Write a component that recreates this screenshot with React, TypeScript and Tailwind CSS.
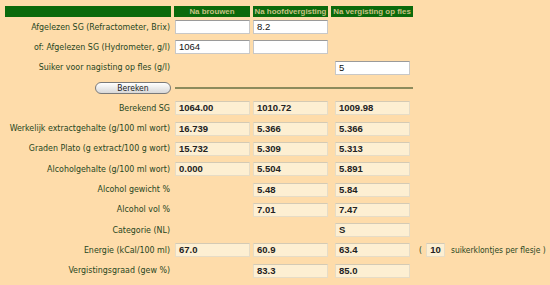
import React from "react";

type Row = {
  label: string;
  values: (string | null)[];
  extra?: boolean;
};

const results: Row[] = [
  { label: "Berekend SG", values: ["1064.00", "1010.72", "1009.98"] },
  { label: "Werkelijk extractgehalte (g/100 ml wort)", values: ["16.739", "5.366", "5.366"] },
  { label: "Graden Plato (g extract/100 g wort)", values: ["15.732", "5.309", "5.313"] },
  { label: "Alcoholgehalte (g/100 ml wort)", values: ["0.000", "5.504", "5.891"] },
  { label: "Alcohol gewicht %", values: [null, "5.48", "5.84"] },
  { label: "Alcohol vol %", values: [null, "7.01", "7.47"] },
  { label: "Categorie (NL)", values: [null, null, "S"] },
  { label: "Energie (kCal/100 ml)", values: ["67.0", "60.9", "63.4"], extra: true },
  { label: "Vergistingsgraad (gew %)", values: [null, "83.3", "85.0"] },
];

const labelFont = { fontFamily: '"DejaVu Sans Condensed", "DejaVu Sans", Verdana, sans-serif' };
const valueFont = { fontFamily: '"Liberation Sans", Arial, sans-serif' };

function Label({ children }: { children: React.ReactNode }) {
  return (
    <div className="flex items-center justify-end pr-[1px] text-[8.8px] text-[#27461d] whitespace-nowrap">
      {children}
    </div>
  );
}

function TextInput({ value, className = "" }: { value?: string; className?: string }) {
  return (
    <div className={`flex items-center ${className}`}>
      <div
        className="h-[14px] w-[75px] bg-white border border-[#c8c8c8] border-t-[#9a9a9a] pl-[3px] text-[9.5px] leading-[12px] text-[#111]"
        style={valueFont}
      >
        {value}
      </div>
    </div>
  );
}

function Field({ value, className = "" }: { value: string | null; className?: string }) {
  if (value === null) return <div />;
  return (
    <div className={`flex items-center ${className}`}>
      <div
        className="h-[14px] w-[75px] bg-[#fdefd2] border border-[#e6dcc6] border-t-[#d4cab4] pl-[3px] text-[9.5px] font-bold leading-[12px] text-[#222]"
        style={valueFont}
      >
        {value}
      </div>
    </div>
  );
}

export default function App() {
  const grid = "grid grid-cols-[166px_76px_75px_82px_auto] gap-x-[3px]";
  const head = "bg-[#0b6a0b] text-[7.9px] font-bold text-[#c8c184] flex items-center justify-center leading-none whitespace-nowrap overflow-hidden";
  return (
    <div className="w-[550px] h-[285px] bg-[#fedcaa] overflow-hidden pl-[5px] pt-[6px]" style={labelFont}>
      <div className={`${grid} h-[11px]`} style={valueFont}>
        <div className="bg-[#0b6a0b]" />
        <div className={head}>Na brouwen</div>
        <div className={head}>Na hoofdvergisting</div>
        <div className={head}>Na vergisting op fles</div>
        <div />
      </div>

      <div className={`${grid} auto-rows-[20.3px]`}>
        <Label>Afgelezen SG (Refractometer, Brix)</Label>
        <TextInput className="pl-[1px]" />
        <TextInput value="8.2" />
        <div />
        <div />

        <Label>of: Afgelezen SG (Hydrometer, g/l)</Label>
        <TextInput value="1064" className="pl-[1px]" />
        <TextInput />
        <div />
        <div />

        <Label>Suiker voor nagisting op fles (g/l)</Label>
        <div />
        <div />
        <TextInput value="5" className="pl-[4px]" />
        <div />

        <div className="flex items-center justify-end">
          <button className="h-[12px] w-[76px] rounded-full border border-[#7a7a7a] bg-gradient-to-b from-white to-[#d8d8d8] text-[8.5px] leading-none text-[#222]">
            Bereken
          </button>
        </div>
        <div className="col-span-3 flex items-center pl-[1px]">
          <div className="h-[1.5px] w-full bg-[#8d8b5c]" />
        </div>
        <div />

        {results.map((r) => (
          <React.Fragment key={r.label}>
            <Label>{r.label}</Label>
            <Field value={r.values[0]} className="pl-[1px]" />
            <Field value={r.values[1]} />
            <Field value={r.values[2]} className="pl-[4px]" />
            {r.extra ? (
              <div className="flex items-center pl-[3px] text-[8.4px] text-[#27461d] whitespace-nowrap">
                <span>(</span>
                <span
                  className="ml-[4px] h-[14px] w-[19px] bg-[#fdefd2] border border-[#e6dcc6] border-t-[#d4cab4] text-center text-[9.5px] font-bold text-[#222] leading-[12px]"
                  style={valueFont}
                >
                  10
                </span>
                <span className="ml-[6px]">suikerklontjes per flesje )</span>
              </div>
            ) : (
              <div />
            )}
          </React.Fragment>
        ))}
      </div>
    </div>
  );
}
